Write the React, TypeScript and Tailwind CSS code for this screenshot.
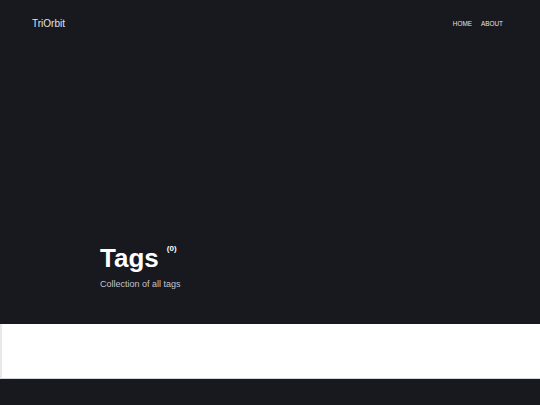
export default function App() {
  return (
    <div
      className="min-h-[405px] bg-[#18181f] text-white"
      style={{ fontFamily: "'Liberation Sans', Arial, sans-serif" }}
    >
      <section className="flex h-[324px] flex-col">
        <header className="flex items-center justify-between pl-[32px] pr-[37px] pt-[18px]">
          <a className="text-[10px] leading-[12px] text-[#e4e4e7]">TriOrbit</a>
          <nav className="flex gap-[9px] text-[6.4px] leading-[8px] text-[#e4e4e7]">
            <a>HOME</a>
            <a>ABOUT</a>
          </nav>
        </header>
        <div className="mt-auto pb-[34px] pl-[100px]">
          <div className="flex items-start">
            <h1 className="text-[26px] font-bold leading-[30px]">Tags</h1>
            <span className="ml-[8px] mt-[1px] text-[8px] font-bold leading-[10px]">(0)</span>
          </div>
          <p className="mt-[6px] text-[9px] leading-[11px] text-[#c4c4c8]">
            Collection of all tags
          </p>
        </div>
      </section>
      <main className="h-[55px] border-b border-l-2 border-b-[#d4d4dc] border-l-[#e8e8ec] bg-white" />
      <footer className="h-[26px]" />
    </div>
  );
}
